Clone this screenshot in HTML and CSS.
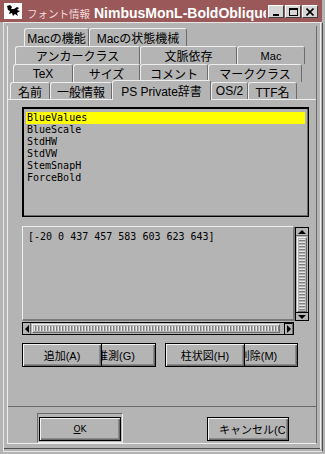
FILE: index.html
```html
<!DOCTYPE html>
<html lang="ja">

<head>
    <meta charset="utf-8">
    <title>フォント情報</title>
    <link rel="stylesheet" href="styles.css">
</head>

<body>
    <div class="window">
        <div class="titlebar">
            <div class="app-icon">
                <svg width="18" height="16" viewBox="0 0 18 16">
                    <path d="M3 3 L6 2 L8 4 L7 6 L10 6 L13 4 L15 5 L13 7 L16 8 L13 10 L14 13 L11 11 L9 13 L8 10 L5 11 L6 8 L4 7 Z" fill="#000" />
                </svg>
            </div>
            <div class="title-text"><span class="title-ja">フォント情報</span><span class="title-name">NimbusMonL-BoldOblique</span></div>
            <div class="wm-buttons">
                <div class="wm-btn"><span class="ico-min"></span></div>
                <div class="wm-btn"><span class="ico-max"></span></div>
                <div class="wm-btn">
                    <svg width="8" height="8" viewBox="0 0 8 8">
                        <path d="M0.5 0.5 L7.5 7.5 M7.5 0.5 L0.5 7.5" stroke="#000" stroke-width="1.6" />
                    </svg>
                </div>
            </div>
        </div>

        <div class="frame">
            <div class="dialog">
                <!-- tab rows, back to front -->
                <div class="tabs">
                    <div class="tab-row row1">
                        <div class="tab t-macfeat">Macの機能</div>
                        <div class="tab t-macstate">Macの状態機械</div>
                    </div>
                    <div class="tab-row row2">
                        <div class="tab t-anchor">アンカークラス</div>
                        <div class="tab t-context">文脈依存</div>
                        <div class="tab t-mac small">Mac</div>
                    </div>
                    <div class="tab-row row3">
                        <div class="tab t-tex">TeX</div>
                        <div class="tab t-size">サイズ</div>
                        <div class="tab t-comment">コメント</div>
                        <div class="tab t-mark">マーククラス</div>
                    </div>
                    <div class="tab-row row4">
                        <div class="tab t-name">名前</div>
                        <div class="tab t-general">一般情報</div>
                        <div class="tab t-private active">PS Private辞書</div>
                        <div class="tab t-os2">OS/2</div>
                        <div class="tab t-ttf">TTF名</div>
                    </div>
                </div>

                <div class="page">
                    <div class="listbox">
                        <div class="item selected">BlueValues</div>
                        <div class="item">BlueScale</div>
                        <div class="item">StdHW</div>
                        <div class="item">StdVW</div>
                        <div class="item">StemSnapH</div>
                        <div class="item">ForceBold</div>
                    </div>

                    <div class="editor">
                        <div class="text-box">[-20 0 437 457 583 603 623 643]</div>
                        <div class="vscroll">
                            <div class="arrow-btn"><span class="tri-up"></span></div>
                            <div class="vthumb"></div>
                            <div class="arrow-btn"><span class="tri-down"></span></div>
                        </div>
                        <div class="hscroll">
                            <div class="arrow-btn h"><span class="tri-left"></span></div>
                            <div class="hthumb"></div>
                            <div class="arrow-btn h right-btn"><span class="tri-right"></span></div>
                        </div>
                    </div>

                    <div class="btn-row">
                        <div class="btn front">追加(A)</div>
                        <div class="btn back">推測(G)</div>
                        <div class="btn front gap">柱状図(H)</div>
                        <div class="btn back back2">削除(M)</div>
                    </div>
                </div>

                <div class="footer">
                    <div class="default-frame">
                        <div class="btn ok-btn"><span class="mnemonic">O</span>K</div>
                    </div>
                    <div class="btn cancel-btn"><span class="btn-label">キャンセル(C)</span></div>
                </div>
            </div>
        </div>
    </div>
</body>

</html>
```

FILE: styles.css
```css
/* whole window */
body {
    margin: 0;
    background-color: #b4b4b4;
    font-family: "Liberation Sans", "Noto Sans CJK JP", sans-serif;
    color: #000;
}

.window {
    width: 325px;
    height: 454px;
    display: flex;
    flex-direction: column;
    background-color: #b4b4b4;
    overflow: hidden;
}

/* title bar */
.titlebar {
    height: 22px;
    margin-right: 3px;
    background-color: #9a5858;
    display: flex;
    align-items: flex-start;
    flex-shrink: 0;
}

.app-icon {
    width: 18px;
    height: 16px;
    margin: 3px 0 0 4px;
    background-color: #fff;
    flex-shrink: 0;
}

.app-icon svg {
    display: block;
}

.title-text {
    flex: 1;
    min-width: 0;
    overflow: hidden;
    white-space: nowrap;
    padding: 4px 0 0 5px;
    line-height: 18px;
}

.title-ja {
    color: #f2dada;
    font-size: 10.5px;
    font-family: "Noto Sans CJK JP", sans-serif;
}

.title-name {
    color: #fff;
    font-weight: bold;
    font-size: 14px;
    margin-left: 4px;
}

.wm-buttons {
    display: flex;
    gap: 1px;
    margin: 5px 4px 0 2px;
}

.wm-btn {
    width: 16px;
    height: 13px;
    box-sizing: border-box;
    background-color: #d6d6d6;
    border: 1px solid;
    border-color: #fff #404040 #404040 #fff;
    display: flex;
    align-items: center;
    justify-content: center;
}

.ico-min {
    width: 6px;
    height: 2px;
    background-color: #000;
    margin-top: 6px;
}

.ico-max {
    width: 7px;
    height: 5px;
    border: 1px solid #000;
    border-top-width: 2px;
}

/* frame around the dialog */
.frame {
    flex: 1;
    display: flex;
    margin: 0 2px 2px 3px;
    border: 1px solid;
    border-color: #e6e6e6 #505050 #e6e6e6 #e6e6e6;
    padding: 3px 5px 7px 3px;
    box-shadow: inset -1px 0 0 #b4b4b4, inset 0 -2px 0 #b4b4b4, inset -2px 0 0 #eeeeee, inset 0 -3px 0 #505050;
}

.dialog {
    flex: 1;
    display: flex;
    flex-direction: column;
    border: 1px solid;
    border-top: none;
    border-color: #eeeeee #6b6b6b #eeeeee #eeeeee;
}

/* tabs */
.tabs {
    height: 73px;
    padding-top: 2px;
    box-sizing: border-box;
    flex-shrink: 0;
}

.tab-row {
    display: flex;
    height: 18px;
}

.row1 { margin-left: 16px; }
.row2 { margin-left: 7px; }
.row3 { margin-left: 5px; }
.row4 { margin-left: 2px; height: 17px; }

.tab {
    box-sizing: border-box;
    height: 100%;
    border: 1px solid;
    border-bottom: none;
    border-color: #eeeeee #6b6b6b #6b6b6b #eeeeee;
    border-radius: 3px 3px 0 0;
    display: flex;
    align-items: center;
    justify-content: center;
    font-size: 12px;
    white-space: nowrap;
    overflow: hidden;
    flex-shrink: 0;
}

.tab.small {
    font-size: 11px;
}

.tab.active {
    height: 20px;
    margin-top: -2px;
    position: relative;
    z-index: 1;
    background-color: #b4b4b4;
}

.t-macfeat { width: 65px; }
.t-macstate { width: 98px; }
.t-anchor { width: 125px; }
.t-context { width: 97px; }
.t-mac { width: 68px; }
.t-tex { width: 60px; }
.t-size { width: 67px; }
.t-comment { width: 68px; }
.t-mark { width: 94px; }
.t-name { width: 40px; }
.t-general { width: 62px; }
.t-private { width: 99px; }
.t-os2 { width: 37px; }
.t-ttf { width: 49px; }

/* tab page */
.page {
    height: 308px;
    box-sizing: border-box;
    border-top: 1px solid #eeeeee;
    border-bottom: 1px solid #6b6b6b;
    padding: 7px 7px 0 14px;
    flex-shrink: 0;
}

.listbox {
    height: 110px;
    box-sizing: border-box;
    border: 1px solid #000;
    box-shadow: inset 1px 1px 0 #000, inset -1px -1px 0 #6a6a6a;
    padding: 4px 3px 0 3px;
}

.item {
    height: 12px;
    line-height: 12px;
    font-family: "DejaVu Sans Mono", monospace;
    font-size: 10px;
    padding-left: 1px;
}

.item.selected {
    background-color: #ffff00;
}

.editor {
    margin-top: 9px;
    display: grid;
    grid-template-columns: 273px 14px;
    grid-template-rows: 95px 13px;
    row-gap: 1px;
}

.text-box {
    box-sizing: border-box;
    border-style: solid;
    border-width: 1px 2px 2px 1px;
    border-color: #eeeeee #7a7a7a #7a7a7a #eeeeee;
    padding: 4px 0 0 5px;
    font-family: "DejaVu Sans Mono", monospace;
    font-size: 10px;
    line-height: 12px;
    white-space: nowrap;
}

.vscroll {
    margin-top: 1px;
    height: 94px;
    box-sizing: border-box;
    border: 1px solid #000;
    display: flex;
    flex-direction: column;
}

.hscroll {
    width: 272px;
    box-sizing: border-box;
    border: 1px solid #000;
    display: flex;
}

.arrow-btn {
    height: 7px;
    flex-shrink: 0;
    display: flex;
    align-items: center;
    justify-content: center;
    border-bottom: 1px solid #6b6b6b;
}

.arrow-btn.h {
    height: auto;
    width: 7px;
    border-bottom: none;
    border-right: 1px solid #6b6b6b;
}

.right-btn {
    margin-left: auto;
    border-left: 1px solid #000;
}

.tri-up,
.tri-down {
    width: 0;
    height: 0;
    border-left: 4px solid transparent;
    border-right: 4px solid transparent;
}

.tri-up { border-bottom: 4px solid #000; }
.tri-down { border-top: 4px solid #000; }

.tri-left,
.tri-right {
    width: 0;
    height: 0;
    border-top: 4px solid transparent;
    border-bottom: 4px solid transparent;
}

.tri-left { border-right: 4px solid #000; }
.tri-right { border-left: 4px solid #000; }

.vthumb {
    flex: 1;
    margin: 1px 1px 0 1px;
    border: 1px solid;
    border-color: #eeeeee #6b6b6b #6b6b6b #eeeeee;
    background: repeating-linear-gradient(to bottom, #b4b4b4 0 1px, #e6e6e6 1px 2px, #808080 2px 3px) center / 6px 100% no-repeat;
}

.arrow-btn:last-child {
    border-bottom: none;
    border-top: 1px solid #000;
}

.hthumb {
    width: 246px;
    margin: 1px 0 1px 1px;
    border: 1px solid;
    border-color: #eeeeee #6b6b6b #6b6b6b #eeeeee;
    background: repeating-linear-gradient(to right, #b4b4b4 0 1px, #e6e6e6 1px 2px, #808080 2px 3px) center / 100% 5px no-repeat;
}

/* push buttons */
.btn-row {
    margin-top: 8px;
    display: flex;
}

.btn {
    width: 80px;
    height: 24px;
    box-sizing: border-box;
    flex-shrink: 0;
    border: 1px solid #000;
    box-shadow: inset 1px 1px 0 #f2f2f2, inset -1px -1px 0 #6b6b6b, inset -2px -2px 0 #8a8a8a;
    background-color: #b4b4b4;
    font-size: 11px;
    display: flex;
    align-items: center;
    justify-content: center;
    white-space: nowrap;
    overflow: hidden;
}

.btn.front {
    position: relative;
    z-index: 1;
}

.btn.back { margin-left: -26px; }
.btn.back2 { margin-left: -27px; }
.btn.gap { margin-left: 9px; }

.footer {
    flex: 1;
    display: flex;
    align-items: flex-start;
    padding: 6px 0 0 29px;
}

.default-frame {
    border: 1px solid;
    border-color: #6b6b6b #eeeeee #eeeeee #6b6b6b;
    padding: 3px 1px 1px 1px;
}

.ok-btn {
    width: 82px;
    font-family: "DejaVu Sans", sans-serif;
    font-size: 9px;
}

.mnemonic {
    text-decoration: underline;
}

.cancel-btn {
    width: 82px;
    margin: 4px 0 0 84px;
    justify-content: flex-start;
    padding: 0 3px 0 11px;
}

.btn-label {
    min-width: 0;
    overflow: hidden;
}
```
